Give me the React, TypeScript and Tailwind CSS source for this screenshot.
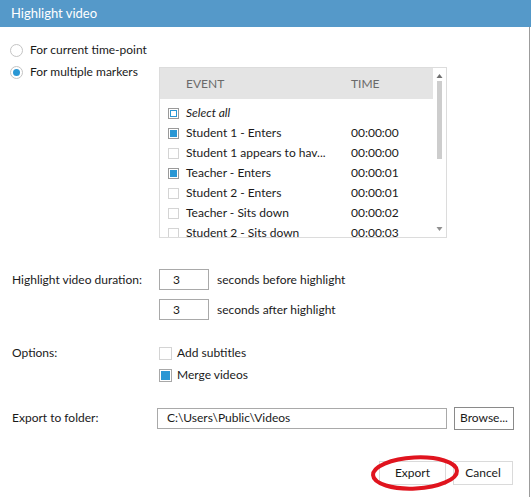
import React from "react";

const font = { fontFamily: '"Segoe UI", Lato, "Noto Sans", sans-serif' };

function ListCheck({ state }: { state: "on" | "off" | "partial" }) {
  if (state === "on")
    return (
      <div className="w-[11px] h-[11px] border border-[#9a9a9a] bg-white flex items-center justify-center">
        <div className="w-[7px] h-[7px] bg-[#2a97d4]" />
      </div>
    );
  if (state === "partial")
    return (
      <div className="w-[11px] h-[11px] border border-[#9a9a9a] bg-white flex items-center justify-center">
        <div className="w-[7px] h-[7px] border border-[#2a97d4]" />
      </div>
    );
  return <div className="w-[11px] h-[11px] border border-[#d4d4d4] bg-white" />;
}

function OptCheck({ on }: { on: boolean }) {
  return on ? (
    <div className="w-[13px] h-[13px] border border-[#a8a8a8] bg-white flex items-center justify-center">
      <div className="w-[9px] h-[9px] bg-[#2a97d4]" />
    </div>
  ) : (
    <div className="w-[13px] h-[13px] border border-[#d4d4d4] bg-white" />
  );
}

const rows: { name: string; time: string; on: boolean }[] = [
  { name: "Student 1 - Enters", time: "00:00:00", on: true },
  { name: "Student 1 appears to hav...", time: "00:00:00", on: false },
  { name: "Teacher - Enters", time: "00:00:01", on: true },
  { name: "Student 2 - Enters", time: "00:00:01", on: false },
  { name: "Teacher - Sits down", time: "00:00:02", on: false },
  { name: "Student 2 - Sits down", time: "00:00:03", on: false },
];

export default function App() {
  return (
    <div className="w-[531px] h-[497px] bg-white text-[12px] text-[#1a1a1a] overflow-hidden flex flex-col" style={font}>
      <div className="h-[27px] bg-[#5599c9] text-white text-[13px] flex items-center pl-[11px] shrink-0">
        Highlight video
      </div>
      <div className="w-[530px] flex-1 border-r border-[#9c9c9c] flex flex-col">
        {/* Section 1 */}
        <div className="flex">
          <div className="w-[159px] pt-[12px] pl-[10px] flex flex-col">
            <div className="h-[22px] flex items-center gap-[7px]">
              <div className="w-[13px] h-[13px] rounded-full border border-[#c4c4c4] bg-white" />
              <span>For current time-point</span>
            </div>
            <div className="h-[22px] flex items-center gap-[7px]">
              <div className="w-[13px] h-[13px] rounded-full border border-[#c4c4c4] bg-white flex items-center justify-center">
                <div className="w-[7px] h-[7px] rounded-full bg-[#2a97d4]" />
              </div>
              <span>For multiple markers</span>
            </div>
          </div>
          <div className="mt-[40px] w-[288px] h-[171px] border border-[#dcdcdc] flex overflow-hidden">
            <div className="flex-1 flex flex-col overflow-hidden">
              <div className="h-[31px] bg-[#e4e4e4] flex items-center text-[#6a6a6a] shrink-0">
                <span className="ml-[26px] w-[165px]">EVENT</span>
                <span>TIME</span>
              </div>
              <div className="pt-[4px] flex flex-col">
                <div className="h-[20px] flex items-center shrink-0">
                  <div className="ml-[8px] w-[18px]"><ListCheck state="partial" /></div>
                  <span className="italic">Select all</span>
                </div>
                {rows.map((r) => (
                  <div key={r.name} className="h-[20px] flex items-center shrink-0">
                    <div className="ml-[8px] w-[18px]"><ListCheck state={r.on ? "on" : "off"} /></div>
                    <span className="w-[165px] whitespace-nowrap">{r.name}</span>
                    <span>{r.time}</span>
                  </div>
                ))}
              </div>
            </div>
            <div className="w-[13px] flex flex-col items-center shrink-0">
              <svg width="7" height="8" viewBox="0 0 7 8" className="mt-[4px]">
                <path d="M0.5 6 L3.5 2 L6.5 6 Z" fill="#707070" />
              </svg>
              <div className="w-[5px] h-[78px] bg-[#cdcdcd] mt-[1px]" />
              <div className="flex-1" />
              <svg width="7" height="8" viewBox="0 0 7 8" className="mb-[4px]">
                <path d="M0.5 2 L3.5 6 L6.5 2 Z" fill="#909090" />
              </svg>
            </div>
          </div>
        </div>

        {/* Duration */}
        <div className="mt-[31px] flex items-center">
          <div className="w-[159px] pl-[12px]">Highlight video duration:</div>
          <div className="w-[50px] h-[21px] border border-[#a9a9a9] flex items-center pl-[13px]">3</div>
          <span className="ml-[8px]">seconds before highlight</span>
        </div>
        <div className="mt-[9px] flex items-center">
          <div className="w-[159px]" />
          <div className="w-[50px] h-[21px] border border-[#a9a9a9] flex items-center pl-[13px]">3</div>
          <span className="ml-[8px]">seconds after highlight</span>
        </div>

        {/* Options */}
        <div className="mt-[22px] h-[22px] flex items-center">
          <div className="w-[159px] pl-[12px]">Options:</div>
          <OptCheck on={false} />
          <span className="ml-[5px]">Add subtitles</span>
        </div>
        <div className="h-[22px] flex items-center">
          <div className="w-[159px]" />
          <OptCheck on={true} />
          <span className="ml-[5px]">Merge videos</span>
        </div>

        {/* Export folder */}
        <div className="mt-[21px] h-[22px] flex items-center">
          <div className="w-[157px] pl-[12px]">Export to folder:</div>
          <div className="w-[290px] h-[21px] border border-[#a9a9a9] flex items-center pl-[9px]">C:\Users\Public\Videos</div>
          <div className="ml-[7px] w-[60px] h-[23px] border border-[#8a8a8a] bg-white flex items-center justify-center">Browse...</div>
        </div>

        {/* Buttons */}
        <div className="mt-[32px] flex justify-end pr-[16px]">
          <div className="relative">
            <div className="w-[67px] h-[24px] border border-[#dadada] flex items-center justify-center">Export</div>
            <svg width="100" height="42" viewBox="0 0 100 42" className="absolute left-[-15px] top-[-9px] pointer-events-none">
              <ellipse cx="51" cy="21" rx="42" ry="15.5" fill="none" stroke="#e0141e" strokeWidth="4" transform="rotate(-3 51 21)" />
            </svg>
          </div>
          <div className="ml-[7px] w-[60px] h-[24px] border border-[#dadada] flex items-center justify-center">Cancel</div>
        </div>
      </div>
    </div>
  );
}
